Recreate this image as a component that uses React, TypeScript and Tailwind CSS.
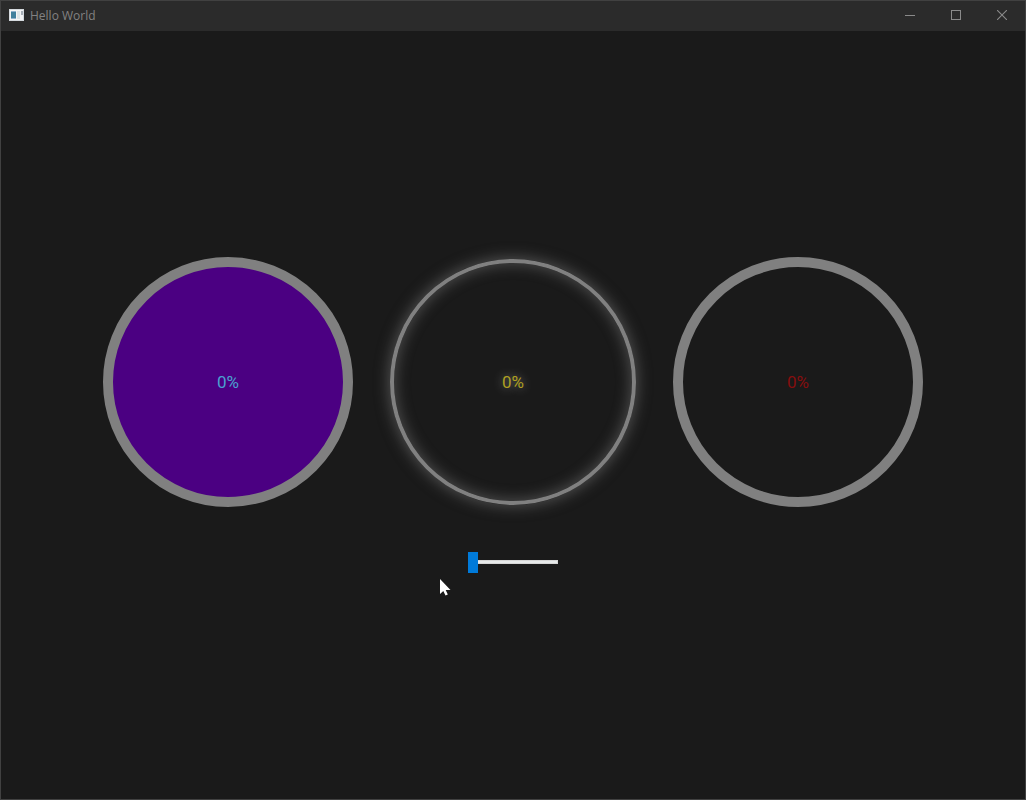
import { useState } from "react";

type GaugeVariant = "filled" | "glow" | "plain";

const ringStyles: Record<GaugeVariant, string> = {
  filled: "border-10 border-[#808080] bg-[#4b0082] text-[#4aa0d0]",
  glow: "text-[#b0a020]",
  plain: "border-10 border-[#808080] text-[#860e0e]",
};

function Gauge({ variant, value }: { variant: GaugeVariant; value: number }) {
  return (
    <div
      className={`flex size-[250px] shrink-0 items-center justify-center rounded-full font-[Roboto,sans-serif] text-[17px] leading-5 ${ringStyles[variant]}`}
    >
      {variant === "glow" ? (
        <div className="flex size-[246px] items-center justify-center rounded-full border-4 border-[#808080] shadow-[0_0_14px_2px_#80808080,inset_0_0_14px_2px_#80808078]">
          <span className="[text-shadow:0_0_10px_#808080]">{value}%</span>
        </div>
      ) : (
        <span>{value}%</span>
      )}
    </div>
  );
}

function TitleBar() {
  const button = "flex h-[30px] w-[46px] items-center justify-center pb-[2px]";
  return (
    <header className="flex h-[30px] shrink-0 items-center bg-[#2b2b2b]">
      <svg className="mb-[2px] ml-2 h-3 w-[15px]" viewBox="0 0 15 12" shapeRendering="crispEdges" aria-hidden="true">
        <path d="M0 0h15v12H0z" fill="#d5dade" />
        <path d="M1 1h13v10H1z" fill="#f4f4f4" />
        <path d="M2 2h5v8H2z" fill="#8fb0cc" />
        <path d="M2 3h5v6H2z" fill="#407f9c" />
        <path d="M8 2h3v8H8z" fill="#dce3e6" />
        <path d="M12 2h2v4h-2z" fill="#a8afb7" />
      </svg>
      <h1 className="ml-[6px] font-['Open_Sans',sans-serif] text-xs text-[#828282]">Hello World</h1>
      <div className="ml-auto flex">
        <button className={button} aria-label="Minimize">
          <svg className="size-[10px]" viewBox="0 0 10 10" shapeRendering="crispEdges">
            <path d="M0 5h10v1H0z" fill="#8a8a8a" />
          </svg>
        </button>
        <button className={button} aria-label="Maximize">
          <svg className="size-[10px]" viewBox="0 0 10 10" shapeRendering="crispEdges">
            <path d="M.5 .5h9v9h-9z" fill="none" stroke="#8a8a8a" />
          </svg>
        </button>
        <button className={button} aria-label="Close">
          <svg className="size-[10px]" viewBox="0 0 10 10">
            <path d="M0 0l10 10M10 0L0 10" fill="none" stroke="#8a8a8a" strokeWidth="1.1" />
          </svg>
        </button>
      </div>
    </header>
  );
}

export default function App() {
  const [value, setValue] = useState(0);
  return (
    <div className="relative flex min-h-screen flex-col border border-[#414141] bg-[#1a1a1a]">
      <TitleBar />
      <main className="flex flex-1 flex-col items-center justify-center gap-[45px] pb-px">
        <div className="flex flex-wrap justify-center gap-[35px]">
          <Gauge variant="filled" value={value} />
          <Gauge variant="glow" value={value} />
          <Gauge variant="plain" value={value} />
        </div>
        <input
          type="range"
          min={0}
          max={100}
          value={value}
          onChange={(e) => setValue(Number(e.target.value))}
          aria-label="Progress"
          className="h-5 w-[90px] appearance-none bg-transparent [&::-webkit-slider-runnable-track]:h-1 [&::-webkit-slider-runnable-track]:bg-[#e7eaea] [&::-webkit-slider-runnable-track]:shadow-[inset_0_0_0_1px_#d6d6d6] [&::-webkit-slider-thumb]:-mt-2 [&::-webkit-slider-thumb]:h-[21px] [&::-webkit-slider-thumb]:w-[10px] [&::-webkit-slider-thumb]:appearance-none [&::-webkit-slider-thumb]:bg-[#007ad9]"
        />
      </main>
      <svg
        className="pointer-events-none absolute top-[577px] left-[438px] h-[18px] w-3"
        viewBox="0 0 12 18"
        aria-hidden="true"
      >
        <path d="M1 1v15l3.3-3.1 2.2 4.7 2.3-1-2.1-4.6h4.8z" fill="#fff" />
      </svg>
    </div>
  );
}
